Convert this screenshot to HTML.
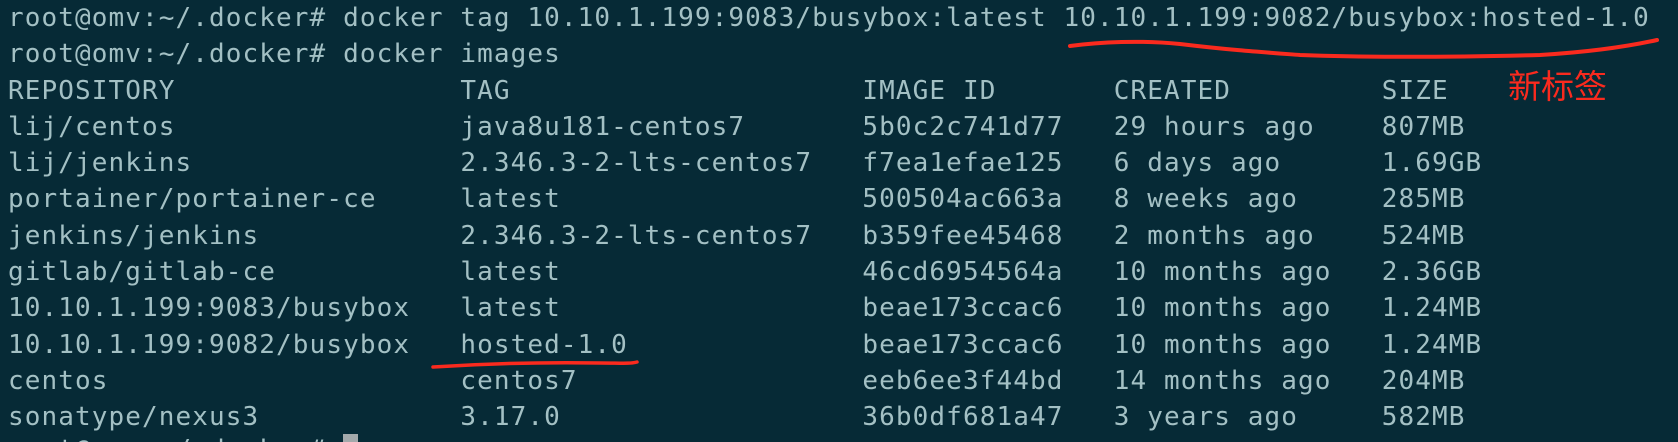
<!DOCTYPE html>
<html><head><meta charset="utf-8"><style>
html{margin:0;padding:0;width:1678px;height:442px;overflow:hidden;background:#062a36;}
body{margin:0;padding:0;width:1678px;height:442px;overflow:hidden;background:#062a36;position:relative;}
pre{margin:0;padding:0 0 0 8px;height:442px;overflow:hidden;font-family:"DejaVu Sans Mono","Liberation Mono",monospace;font-size:26px;letter-spacing:1.1px;line-height:36.3px;color:#a3c0c4;white-space:pre;}
.last{position:relative;top:-4px;}
.cur{display:inline-block;width:15px;height:30px;background:#a3a9ab;vertical-align:-6px;}
.red{position:absolute;left:1508px;top:64px;font-family:"Noto Sans CJK SC",sans-serif;font-size:33px;color:#fa2a1e;line-height:40px;}
svg{position:absolute;left:0;top:0;}
</style></head><body>
<pre>root@omv:~/.docker# docker tag 10.10.1.199:9083/busybox:latest 10.10.1.199:9082/busybox:hosted-1.0
root@omv:~/.docker# docker images
REPOSITORY                 TAG                     IMAGE ID       CREATED         SIZE
lij/centos                 java8u181-centos7       5b0c2c741d77   29 hours ago    807MB
lij/jenkins                2.346.3-2-lts-centos7   f7ea1efae125   6 days ago      1.69GB
portainer/portainer-ce     latest                  500504ac663a   8 weeks ago     285MB
jenkins/jenkins            2.346.3-2-lts-centos7   b359fee45468   2 months ago    524MB
gitlab/gitlab-ce           latest                  46cd6954564a   10 months ago   2.36GB
10.10.1.199:9083/busybox   latest                  beae173ccac6   10 months ago   1.24MB
10.10.1.199:9082/busybox   hosted-1.0              beae173ccac6   10 months ago   1.24MB
centos                     centos7                 eeb6ee3f44bd   14 months ago   204MB
sonatype/nexus3            3.17.0                  36b0df681a47   3 years ago     582MB
<span class="last">root@omv:~/.docker# <span class="cur"></span></span></pre>
<div class="red">新标签</div>
<svg width="1678" height="442">
<path d="M1070 46 C1100 42,1140 40,1180 44 C1230 50,1260 52,1300 55 C1380 58,1460 57,1540 55 C1590 52,1630 46,1657 40" stroke="#fa2a1e" stroke-width="4" fill="none" stroke-linecap="round"/>
<path d="M433 367 C480 364,540 362,600 363 C620 363,630 364,637 362" stroke="#fa2a1e" stroke-width="3.5" fill="none" stroke-linecap="round"/>
</svg>
</body></html>
